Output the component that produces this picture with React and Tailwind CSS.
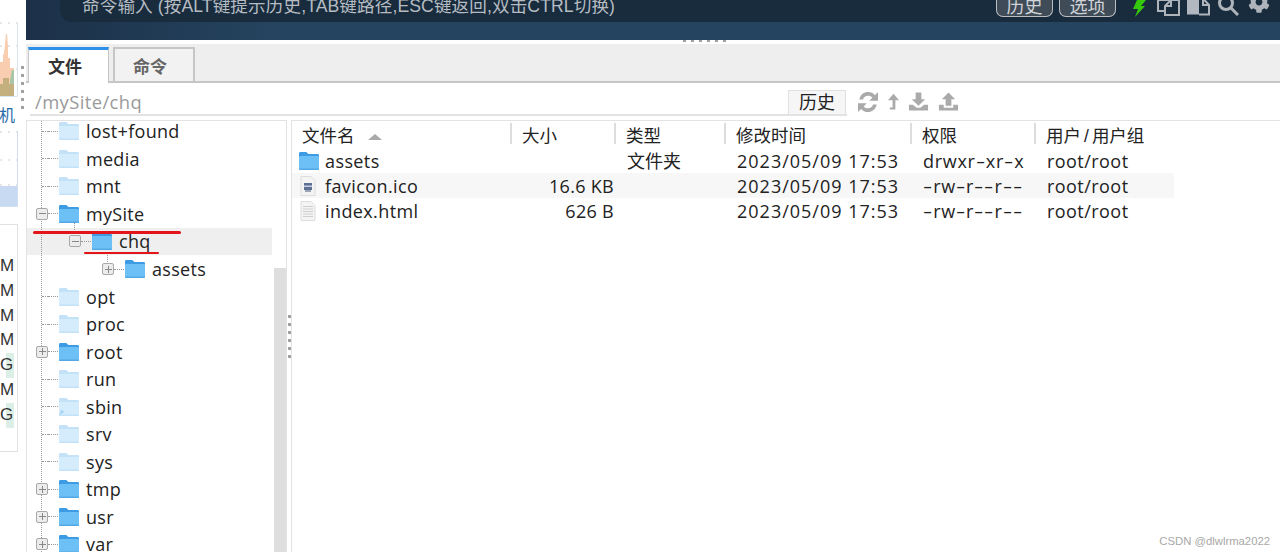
import React from "react";
import { FaCog } from "react-icons/fa";

const FONT = '"Liberation Sans","Noto Sans CJK SC",sans-serif';
const TREE = '"Open Sans","Noto Sans CJK SC",sans-serif';

function Folder({ faded, link, className = "" }) {
  const top = faded ? "#c3e2f8" : "#3d9be3";
  const body = faded ? "#d4ecfc" : "#6cc0f6";
  const bottom = faded ? "#c4e2f7" : "#52a7e4";
  return (
    <svg width="22" height="20" viewBox="0 0 22 20" className={`shrink-0 ${className}`}>
      <path d="M1 4V2.500C1 1.500 1.600 1 2.500 1h5.200c.8 0 1.100.3 1.600.9L10.400 3H19.600C20.500 3 21 3.600 21 4.500V6H1z" fill={top} />
      <rect x="1" y="5" width="20" height="14" rx="1.400" fill={body} />
      <rect x="1" y="17.600" width="20" height="1.400" rx="0.700" fill={bottom} />
      {link && <path d="M1 18.500l2.500-6 3 2.500-2 1z" fill="#a6d5f5" />}
    </svg>
  );
}

function Expander({ open }) {
  return (
    <span className="relative flex h-[12px] w-[12px] shrink-0 items-center justify-center rounded-[2px] border border-[#a8a8a8] bg-[#ececec]">
      <span className="absolute h-px w-[7px] bg-[#888888]" />
      {!open && <span className="absolute h-[7px] w-px bg-[#888888]" />}
    </span>
  );
}

function TreeRow({ name, level = 0, faded, exp, link, selected }) {
  const pad = level === 0 ? "pl-[9px]" : level === 1 ? "pl-[42px]" : "pl-[75px]";
  return (
    <div className={`flex h-[27.55px] w-[245px] items-center ${pad} ${selected ? "bg-[#efefef]" : ""}`}>
      {exp ? (
        <Expander open={exp === "open"} />
      ) : (
        <span className="flex h-[12px] w-[12px] shrink-0 items-center justify-end">
          <span className="h-0 w-[6px] border-t border-dotted border-[#999999]" />
        </span>
      )}
      <span className="h-0 w-[10px] shrink-0 border-t border-dotted border-[#999999]" />
      <Folder faded={faded} link={link} />
      <span className="ml-[6px] text-[18px] leading-none tracking-[0.3px] text-[#222222]" style={{ fontFamily: TREE }}>
        {name}
      </span>
    </div>
  );
}

function FileGlyph({ ico }) {
  return (
    <svg width="16" height="20" viewBox="0 0 16 20" className="shrink-0">
      <path d="M1 0.500h10l4 4v15H1z" fill="#f4f4f4" stroke="#dddddd" />
      {ico ? (
        <g>
          <rect x="4" y="7" width="8" height="7" fill="#5d6f93" />
          <rect x="4" y="9.500" width="8" height="1.500" fill="#c5d0e6" />
          <rect x="5" y="14" width="6" height="2" fill="#9aa4b4" />
        </g>
      ) : (
        <g fill="#cfcfcf">
          <rect x="3" y="5" width="10" height="1" />
          <rect x="3" y="7.500" width="10" height="1" />
          <rect x="3" y="10" width="10" height="1" />
          <rect x="3" y="12.500" width="10" height="1" />
          <rect x="3" y="15" width="10" height="1" />
        </g>
      )}
    </svg>
  );
}

function Perm({ value }) {
  return (
    <>
      {value.split("").map((c, i) =>
        c === "-" ? (
          <span key={i} className="inline-block w-[10.2px] scale-x-[1.6] text-center">
            -
          </span>
        ) : (
          <span key={i}>{c}</span>
        )
      )}
    </>
  );
}

const cols = [
  { key: "name", label: "文件名", w: "w-[220px]", pad: "pl-[10px]" },
  { key: "size", label: "大小", w: "w-[104px]", pad: "pl-[10px]" },
  { key: "type", label: "类型", w: "w-[110px]", pad: "pl-[10px]" },
  { key: "time", label: "修改时间", w: "w-[186px]", pad: "pl-[10px]" },
  { key: "perm", label: "权限", w: "w-[124px]", pad: "pl-[10px]" },
  {
    key: "owner",
    label: (
      <>
        用户<span className="mx-[3px]">/</span>用户组
      </>
    ),
    w: "w-[130px]",
    pad: "pl-[10px]",
  },
];

const files = [
  { name: "assets", size: "", type: "文件夹", perm: "drwxr-xr-x", kind: "folder" },
  { name: "favicon.ico", size: "16.6 KB", type: "", perm: "-rw-r--r--", kind: "ico", alt: true },
  { name: "index.html", size: "626 B", type: "", perm: "-rw-r--r--", kind: "file" },
];

const tree = [
  { name: "lost+found", faded: true },
  { name: "media", faded: true },
  { name: "mnt", faded: true },
  { name: "mySite", exp: "open" },
  { name: "chq", level: 1, exp: "open", selected: true },
  { name: "assets", level: 2, exp: "closed" },
  { name: "opt", faded: true },
  { name: "proc", faded: true },
  { name: "root", exp: "closed" },
  { name: "run", faded: true },
  { name: "sbin", faded: true, link: true },
  { name: "srv", faded: true },
  { name: "sys", faded: true },
  { name: "tmp", exp: "closed" },
  { name: "usr", exp: "closed" },
  { name: "var", exp: "closed" },
];

function Pill({ children }) {
  return (
    <span className="flex h-[17px] w-[57px] items-start justify-center rounded-b-[7px] border border-t-0 border-[#b9bdc2] bg-[#3f4c58] text-[18px] leading-none text-[#cfd3d7]">
      <span className="-mt-[2px]">{children}</span>
    </span>
  );
}

function Dots({ n = 6, vertical, className = "h-[3px] w-[3px]" }) {
  return (
    <div className={`flex ${vertical ? "flex-col" : ""} gap-[5px]`}>
      {Array.from({ length: n }).map((_, i) => (
        <span key={i} className={`${className} bg-[#a0a0a0]`} />
      ))}
    </div>
  );
}

export default function App() {
  return (
    <div className="relative flex h-[552px] w-[1280px] overflow-hidden bg-white" style={{ fontFamily: FONT }}>
      {/* Clipped neighbour panel on the left */}
      <aside className="relative flex w-[26px] shrink-0 flex-col">
        <svg width="18" height="75" viewBox="0 0 18 75" className="mt-[22px]">
          <path d="M0 1h17M0 24h17M0 47h17" stroke="#cfcfcf" strokeDasharray="2 6" />
          <path d="M0 74V40h3v-8h1l1-10 1-10 1 0 1 12v12h2v10h4v28z" fill="#f8cdb0" />
          <path d="M10 74V58l2-10h2v26z" fill="#a9c5a8" />
          <path d="M0 74V62h3v-6h6v6h5v12z" fill="#c4b07e" />
          <path d="M17.500 0v74.500H0" fill="none" stroke="#d5e5f2" />
        </svg>
        <div className="-ml-px mt-[9px] text-[16px] leading-[20px] text-[#2a6ca8]">机</div>
        <svg width="18" height="76" viewBox="0 0 18 76" className="mt-[5px]">
          <path d="M0 1h17M0 29h17M0 54h17" stroke="#cfcfcf" strokeDasharray="2 6" />
          <rect x="0" y="55" width="17" height="20" fill="#c8daf1" />
          <path d="M17.500 0v75.500H0" fill="none" stroke="#cfdff0" />
        </svg>
        <div className="mt-[17px] flex h-[228px] w-[18px] flex-col border border-l-0 border-[#e1e1e1] pt-[29px] text-[17px] leading-[24.8px] text-[#333333]">
          {["M", "M", "M", "M", "G", "M", "G"].map((c, i) => (
            <div key={i} className={c === "G" ? "w-[14px] bg-gradient-to-r from-white from-40% to-[#dcefe6] to-40%" : ""}>
              {c}
            </div>
          ))}
        </div>
        <div className="absolute left-[21px] top-[66px]">
          <Dots vertical />
        </div>
      </aside>

      <main className="flex min-w-0 flex-1 flex-col">
        {/* Terminal band */}
        <header className="relative h-[40px] shrink-0 overflow-hidden bg-gradient-to-r from-[#1c3048] via-[#25445f] via-20% to-[#25445f]">
          <div className="ml-[34px] flex h-[22px] items-start rounded-bl-[12px] bg-[#182c3d] pl-[22px]">
            <span className="-mt-[2px] text-[17.6px] leading-none tracking-[0.1px] text-[#b6bcc2]">
              命令输入 (按ALT键提示历史,TAB键路径,ESC键返回,双击CTRL切换)
            </span>
          </div>
          <div className="absolute left-[970px] top-0 flex items-start gap-[6px]">
            <Pill>历史</Pill>
            <Pill>选项</Pill>
            <svg width="14" height="17" viewBox="0 0 14 17" className="ml-[10px]">
              <path d="M5 0h9L9 6h4L3 17l3-8H1z" fill="#35c90c" />
            </svg>
            <svg width="23" height="16" viewBox="0 0 23 16" className="ml-[5px]" fill="none" stroke="#aeb4ba" strokeWidth="2">
              <path d="M14 -1V0H1V11H8" />
              <path d="M8 6l6-6h8V15H8zM14 0V6H8" />
            </svg>
            <svg width="23" height="16" viewBox="0 0 23 16" className="ml-px" fill="none" stroke="#aeb4ba" strokeWidth="2">
              <rect x="0" y="-1" width="12" height="15.500" fill="#b3b8c0" stroke="none" />
              <path d="M12 14.500H22V5l-5.500-6M16 -1V5H22" />
            </svg>
            <svg width="21" height="16" viewBox="0 0 21 16" className="ml-[2px]" fill="none" stroke="#aeb4ba" strokeWidth="3">
              <circle cx="8" cy="3" r="6.500" />
              <path d="M13 8l7 7" />
            </svg>
            <FaCog className="-mt-[9px] ml-[3px]" size={22} color="#aeb4ba" />
          </div>
        </header>

        {/* Resize handle gap */}
        <div className="h-[4px] shrink-0 bg-white pl-[657px]">
          <Dots className="h-[2px] w-[3px]" />
        </div>

        {/* Tabs */}
        <nav className="flex h-[39px] shrink-0 items-end gap-[4px] border-b-2 border-[#c6c6c6] bg-[#eeeeee] pl-[2px]">
          <div className="mb-[-2px] flex h-[36px] w-[81px] items-center justify-center border-x border-[#c6c6c6] border-t-[3px] border-t-[#2c8fe8] bg-white pr-[7px] pt-[2px] text-[17px] font-bold text-[#333333]">
            文件
          </div>
          <div className="flex h-[34px] w-[82px] items-center justify-center border-2 border-b-0 border-[#c6c6c6] bg-[#f2f2f2] pr-[8px] pt-[5px] text-[17px] font-bold text-[#666666]">
            命令
          </div>
        </nav>

        {/* Path bar */}
        <div className="mb-[4px] flex h-[33px] shrink-0">
          <div className="ml-[4px] flex w-[817px] items-end justify-between border-b-2 border-[#e3e3e3] pl-[5px]">
            <span className="text-[18.4px] leading-[24px] tracking-[0.4px] text-[#9a9a9a]" style={{ fontFamily: TREE }}>
              /mySite/chq
            </span>
            <span className="mr-px flex h-[24px] w-[58px] items-center justify-center border border-b-0 border-[#e0e0e0] bg-[#f6f6f6] pt-[2px] text-[18px] text-[#222222]">
              历史
            </span>
          </div>
          <div className="ml-[11px] flex items-center pt-[4px]">
            <svg width="20" height="20" viewBox="2 2 16 16" fill="#aaaaaa">
              <path d="M3 8C4 3.800 7 2 10 2c2.400 0 4.200 1 5.500 2.500L18 2v7h-7l2.500-2.500C12.600 5.500 11.400 5 10 5 8 5 6.600 6 6 8zM17 12c-1 4.200-4 6-7 6-2.400 0-4.200-1-5.500-2.500L2 18v-7h7l-2.500 2.500C7.400 14.500 8.600 15 10 15c2 0 3.400-1 4-3z" />
            </svg>
            <svg width="13" height="20" viewBox="0 0 14 20" className="ml-[9px]" fill="#aaaaaa">
              <path d="M7 1l6 7H9v10H3v-2h3V8H1z" />
            </svg>
            <svg width="21" height="20" viewBox="0 0 22 20" className="ml-[8px]" fill="#aaaaaa">
              <path d="M8 0h6v7h4l-7 7-7-7h4z" />
              <path d="M1 13h4l4 3h4l4-3h4v6H1z" />
            </svg>
            <svg width="21" height="20" viewBox="0 0 22 20" className="ml-[9px]" fill="#aaaaaa">
              <path d="M11 0l7 7h-4v7H8V7H4z" />
              <path d="M1 13h5v3h10v-3h5v6H1z" />
            </svg>
          </div>
        </div>

        {/* Split */}
        <section className="flex min-h-0 flex-1">
          {/* Tree */}
          <div className="relative w-[261px] shrink-0 overflow-hidden border-x border-t border-[#e3e3e3]">
            <div className="absolute bottom-0 left-[14px] top-0 border-l border-dotted border-[#999999]" />
            <div className="absolute bottom-0 right-0 top-[147px] w-[12px] bg-[#dedede]" />
            <div className="mt-[-3.5px]">
              {tree.map((t) => (
                <TreeRow key={t.name + (t.level || 0)} {...t} />
              ))}
            </div>
            <div className="absolute left-[47px] top-[102px] h-[11px] border-l border-dotted border-[#999999]" />
            <div className="absolute left-[80px] top-[132px] h-[9px] border-l border-dotted border-[#999999]" />
            <div className="absolute left-[6px] top-[110px] h-[3px] w-[148px] rounded-full bg-[#e3141a]" />
            <div className="absolute left-[57px] top-[131px] h-[2px] w-[75px] rounded-full bg-[#e3141a]" />
          </div>

          {/* Splitter */}
          <div className="flex w-[4px] shrink-0 items-center justify-center">
            <Dots vertical />
          </div>

          {/* Table */}
          <div className="min-w-0 flex-1 border-l border-t border-[#e3e3e3]">
            <div className="flex h-[27px] items-start pt-[2px]">
              {cols.map(({ key, label, w, pad }, i) => (
                <div
                  key={key}
                  className={`flex h-[21px] shrink-0 items-center ${w} ${pad} ${i < cols.length - 1 ? "border-r-2 border-[#dddddd]" : ""} pt-[6px] text-[17.5px] leading-none text-[#222222]`}
                >
                  {label}
                  {i === 0 && (
                    <span className="ml-[13px] h-0 w-0 border-x-[7px] border-b-[6px] border-x-transparent border-b-[#aaaaaa]" />
                  )}
                </div>
              ))}
            </div>
            <div className="w-[882px]">
              {files.map((f) => (
                <div
                  key={f.name}
                  className={`flex h-[25px] items-center text-[18px] leading-none text-[#222222] ${f.alt ? "bg-[#f7f7f7]" : ""}`}
                  style={{ fontFamily: TREE }}
                >
                  <div className="flex w-[220px] shrink-0 items-center pl-[6px]">
                    {f.kind === "folder" ? (
                      <Folder />
                    ) : (
                      <span className="ml-[2px] mr-[4px] flex">
                        <FileGlyph ico={f.kind === "ico"} />
                      </span>
                    )}
                    <span className="ml-[5px] tracking-[0.4px]">{f.name}</span>
                  </div>
                  <div className="w-[113px] shrink-0 pr-[11px] text-right tracking-[0.3px]">{f.size}</div>
                  <div className="w-[110px] shrink-0 pl-[2px]">{f.type}</div>
                  <div className="w-[186px] shrink-0 pl-[2px] tracking-[1px]">2023/05/09 17:53</div>
                  <div className="w-[124px] shrink-0 pl-[2px] tracking-[0.7px]">
                    <Perm value={f.perm} />
                  </div>
                  <div className="pl-[2px] tracking-[0.45px]">root/root</div>
                </div>
              ))}
            </div>
          </div>
        </section>
      </main>

      <div className="absolute bottom-[5px] right-[10px] text-[11.3px] leading-none text-[#a8a8a8]">CSDN @dlwlrma2022</div>
    </div>
  );
}
